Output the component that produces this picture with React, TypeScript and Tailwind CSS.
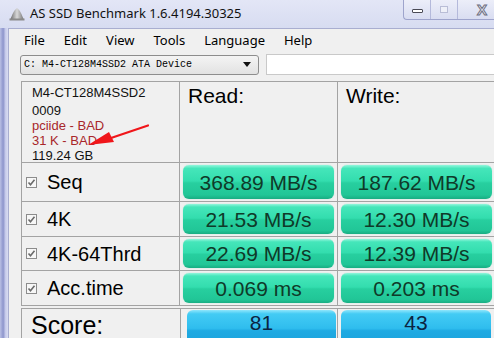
import React from "react";

const greenBtn =
  "h-full rounded-[6px] flex items-center justify-center text-[21px] leading-none text-[#0f3a29] font-['Liberation_Sans',Arial,sans-serif] bg-[linear-gradient(to_bottom,#93f6dc_0%,#45e6ba_10%,#33ddae_47%,#27cf9f_53%,#21c697_88%,#18ad82_100%)] shadow-[0_0_1px_#7fd9bd]";
const blueBtn =
  "h-full rounded-t-[6px] flex items-start pt-[2px] justify-center text-[21px] leading-none text-[#0b2442] font-['Liberation_Sans',Arial,sans-serif] bg-[linear-gradient(to_bottom,#8fe6fc_0%,#43cbf4_10%,#2fbdee_47%,#1faae2_53%,#1aa0da_100%)]";

function Check() {
  return (
    <svg width="11" height="11" viewBox="0 0 11 11" className="shrink-0">
      <rect x="0.5" y="0.5" width="10" height="10" fill="#f7f7f7" stroke="#8c8c8c" />
      <path d="M2.5 5.5 L4.5 7.8 L8.5 2.8" fill="none" stroke="#6a6a6a" strokeWidth="1.6" />
    </svg>
  );
}

function Label({ text }: { text: string }) {
  return (
    <div className="bg-[#f0f0f0] flex items-center pl-[4px] gap-[10px]">
      <Check />
      <span className="text-[20px] leading-none text-black">{text}</span>
    </div>
  );
}

function Cell({ v }: { v: string }) {
  return (
    <div className="bg-[#f0f0f0] px-[3px] py-[2px]">
      <div className={greenBtn}>{v}</div>
    </div>
  );
}

export default function App() {
  return (
    <div className="w-[494px] h-[338px] overflow-hidden flex flex-col bg-[#d0d5ef] font-['Liberation_Sans',Arial,sans-serif]">
      {/* title bar */}
      <div className="h-[28px] flex items-start bg-[linear-gradient(to_bottom,#e3e6f6,#d7dcf1)] shrink-0">
        <div className="flex items-center h-[27px] pl-[9px]">
          <svg width="16" height="14" viewBox="0 0 16 14">
            <defs>
              <linearGradient id="ic" x1="0" y1="0" x2="1" y2="0">
                <stop offset="0" stopColor="#6f6f6f" />
                <stop offset="0.5" stopColor="#d8d8d8" />
                <stop offset="1" stopColor="#7a7a7a" />
              </linearGradient>
            </defs>
            <path d="M8 1 C5 3 3 8 1.5 12 L14.5 12 C13 8 11 3 8 1 Z" fill="url(#ic)" />
            <rect x="0.5" y="11.5" width="15" height="2" fill="#8a8a8a" />
          </svg>
          <span className="ml-[5px] text-[13px] text-[#111] font-['Noto_Sans',sans-serif] leading-none">
            AS SSD Benchmark 1.6.4194.30325
          </span>
        </div>
        <div className="ml-auto flex h-[20px] border-l border-b border-[#9ea4cc] rounded-bl-[4px] bg-[linear-gradient(to_bottom,#eceef9,#d9ddf1)]">
          <div className="w-[27px] flex items-center justify-center border-r border-[#b4b9db]">
            <div className="w-[11px] h-[4px] mt-[3px] border border-[#4a4a55] bg-white rounded-[1px]" />
          </div>
          <div className="w-[27px] flex items-center justify-center border-r border-[#b4b9db]">
            <div className="w-[8px] h-[7px] border border-[#b9bdd6] bg-[#eef0f8]" />
          </div>
          <div className="w-[36px] flex items-center justify-center pl-[12px]">
            <span className="text-[15px] leading-none font-bold text-[#eef0f8] [-webkit-text-stroke:1px_#6d6f80]">X</span>
          </div>
        </div>
      </div>

      {/* body */}
      <div className="flex flex-1 min-h-0">
        <div className="w-[8px] shrink-0 bg-[linear-gradient(to_right,#b9bfe4,#8d95cc_40%,#c9cdec_70%,#d8dcf2)]" />
        <div className="flex-1 bg-[#f0f0f0] flex flex-col border-t border-l border-[#a9aed0]">
          {/* menu */}
          <div className="h-[23px] flex items-center pl-[15px] gap-[19px] text-[13px] text-black font-['Noto_Sans',sans-serif] leading-none shrink-0">
            <span>File</span>
            <span>Edit</span>
            <span>View</span>
            <span>Tools</span>
            <span>Language</span>
            <span>Help</span>
          </div>
          {/* combo row */}
          <div className="flex items-center pl-[11px] h-[21px] mt-[2px] shrink-0">
            <div className="w-[239px] h-[20px] rounded-[3px] border border-[#8d8d8d] bg-[linear-gradient(to_bottom,#f4f4f4,#e2e2e2)] flex items-center pl-[3px] pr-[4px]">
              <span className="text-[10px] leading-none text-black font-['Liberation_Mono',monospace] whitespace-pre">
                C: M4-CT128M4SSD2 ATA Device
              </span>
              <svg width="8" height="5" viewBox="0 0 8 5" className="ml-auto mr-[3px]">
                <path d="M0 0 L8 0 L4 5 Z" fill="#111" />
              </svg>
            </div>
            <div className="ml-[7px] flex-1 h-[21px] bg-white border border-[#c9c9c9] border-r-0" />
          </div>

          {/* table */}
          <div className="pl-[12px] mt-[6px]">
            <div className="grid grid-cols-[157px_157px_157px] grid-rows-[80px_38px_34px_33px_34px] gap-px p-px bg-[#a3a3a3] w-[475px]">
              {/* header */}
              <div className="bg-[#f0f0f0] relative pl-[10px] pt-[3px] text-[13px] leading-[15px] text-[#111]">
                <div className="mb-[3px]">M4-CT128M4SSD2</div>
                <div>0009</div>
                <div className="text-[#a8262a]">pciide - BAD</div>
                <div className="text-[#a8262a]">31 K - BAD</div>
                <div>119.24 GB</div>
                <svg width="157" height="80" viewBox="0 0 157 80" className="absolute left-0 top-0">
                  <path d="M126 43.5 L89 56" stroke="#f0161a" strokeWidth="2.2" fill="none" strokeLinecap="round" />
                  <path d="M66 63 L87 50 L92 60 Z" fill="#f0161a" />
                </svg>
              </div>
              <div className="bg-[#f0f0f0] pl-[8px] pt-[3px] text-[21px] leading-none text-black">Read:</div>
              <div className="bg-[#f0f0f0] pl-[8px] pt-[3px] text-[21px] leading-none text-black">Write:</div>

              <Label text="Seq" />
              <Cell v="368.89 MB/s" />
              <Cell v="187.62 MB/s" />

              <Label text="4K" />
              <Cell v="21.53 MB/s" />
              <Cell v="12.30 MB/s" />

              <Label text="4K-64Thrd" />
              <Cell v="22.69 MB/s" />
              <Cell v="12.39 MB/s" />

              <Label text="Acc.time" />
              <Cell v="0.069 ms" />
              <Cell v="0.203 ms" />
            </div>

            {/* score */}
            <div className="mt-[2px] grid grid-cols-[158px_156px_157px] grid-rows-[40px] gap-px p-px pb-0 bg-[#a3a3a3] w-[475px]">
              <div className="bg-[#f0f0f0] pl-[9px] pt-[4px] text-[25px] leading-none text-black">Score:</div>
              <div className="bg-[#f0f0f0] pl-[6px] pr-[1px] pt-[1px]">
                <div className={blueBtn}>81</div>
              </div>
              <div className="bg-[#f0f0f0] pl-[3px] pr-[4px] pt-[1px]">
                <div className={blueBtn}>43</div>
              </div>
            </div>
          </div>
        </div>
      </div>
    </div>
  );
}
